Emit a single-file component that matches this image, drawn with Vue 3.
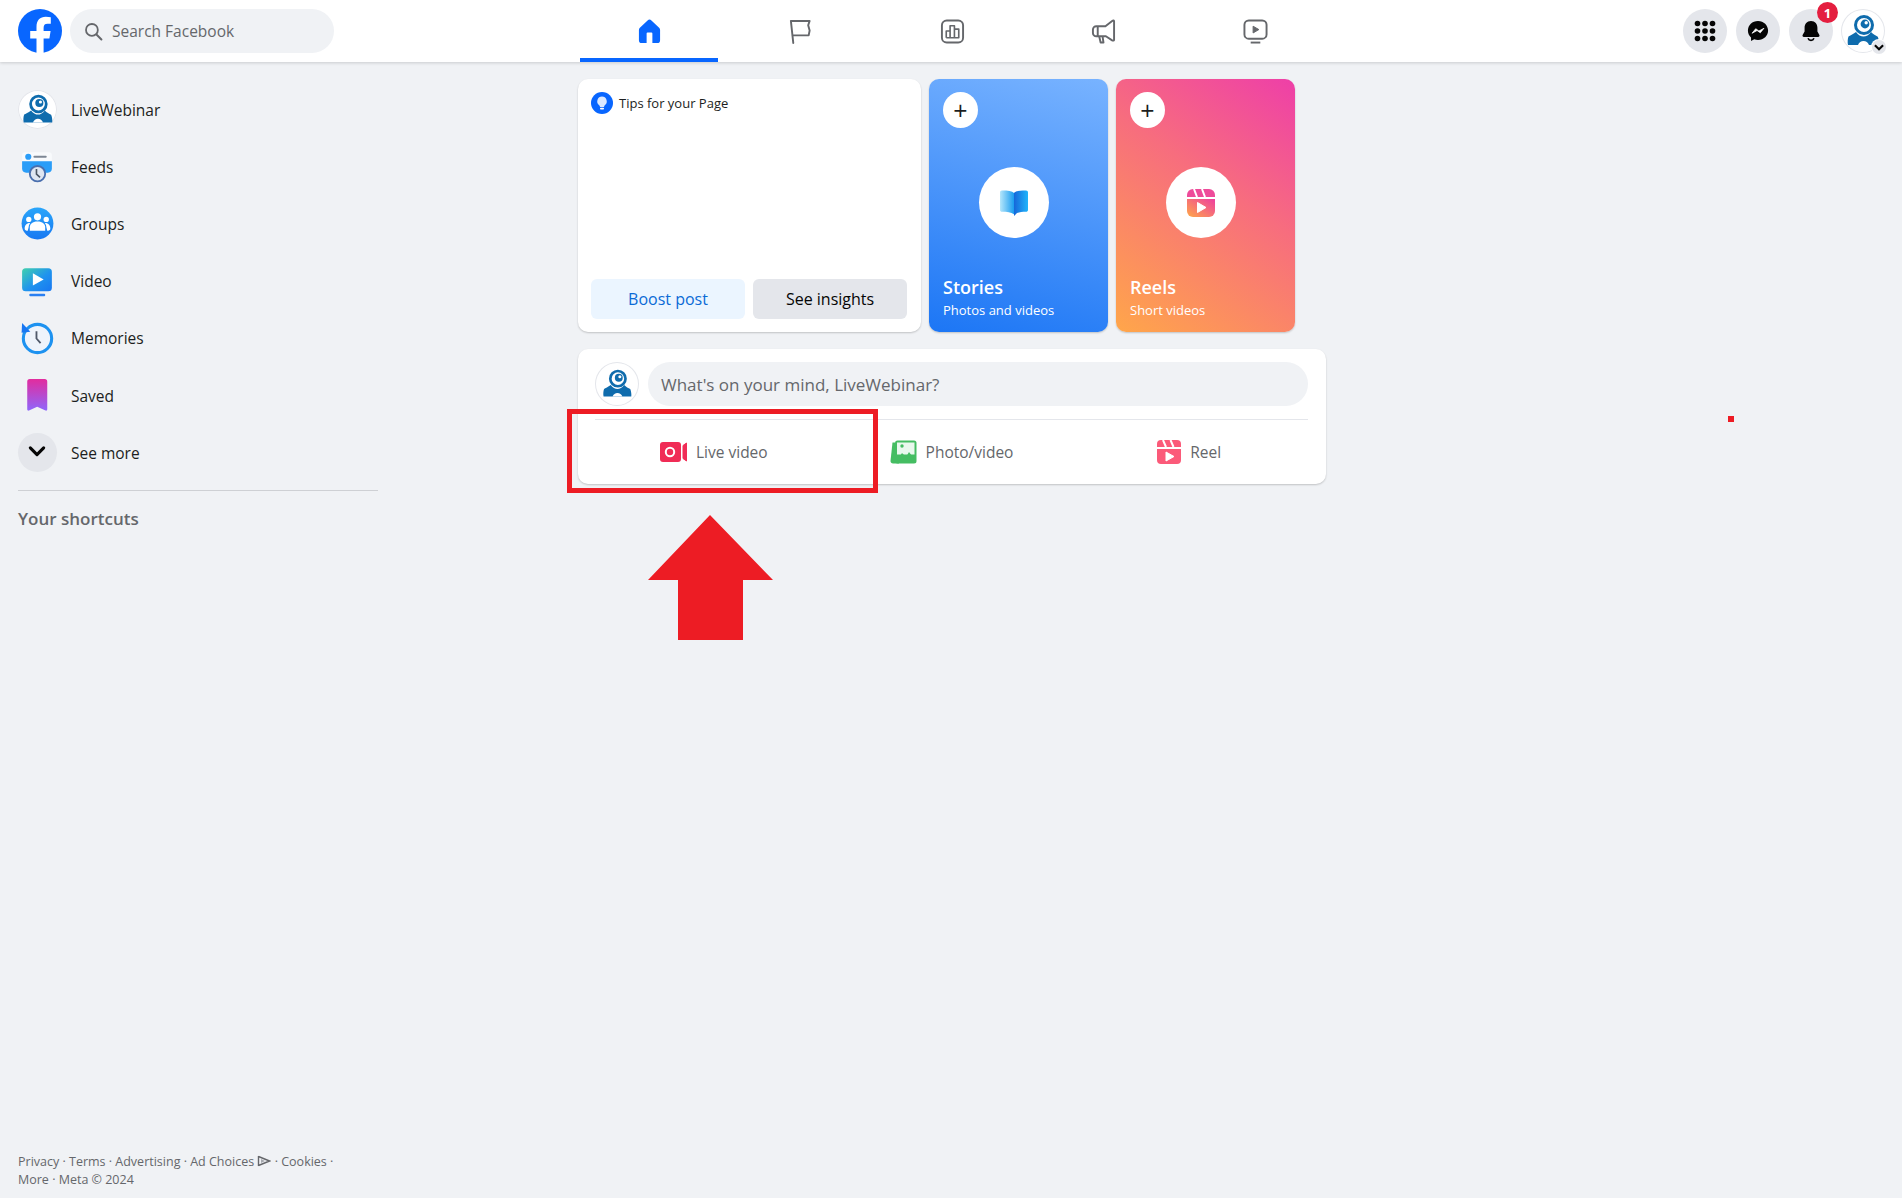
<script setup>
const tabs = ['home', 'flag', 'chart', 'mega', 'play']
const nav = [
  { label: 'LiveWebinar', icon: 'logo' },
  { label: 'Feeds', icon: 'feeds' },
  { label: 'Groups', icon: 'groups' },
  { label: 'Video', icon: 'video' },
  { label: 'Memories', icon: 'memories' },
  { label: 'Saved', icon: 'saved' },
  { label: 'See more', icon: 'more' },
]
</script>

<template>
  <div class="page">
    <svg class="defs" aria-hidden="true">
      <defs>
        <linearGradient id="gGroups" x1="0" y1="0" x2="0" y2="1"><stop offset="0" stop-color="#2aa6fa" /><stop offset="1" stop-color="#1778f2" /></linearGradient>
        <linearGradient id="gVideo" x1="0" y1="0" x2="1" y2="1"><stop offset="0" stop-color="#41d1ad" /><stop offset=".55" stop-color="#1f93ee" /><stop offset="1" stop-color="#1877f2" /></linearGradient>
        <linearGradient id="gSaved" x1="0" y1="0" x2="0" y2="1"><stop offset="0" stop-color="#e22c9e" /><stop offset="1" stop-color="#8f66fb" /></linearGradient>
        <linearGradient id="gBookL" x1="0" y1="0" x2="1" y2="0"><stop offset="0" stop-color="#b5e6fb" /><stop offset="1" stop-color="#1a9df0" /></linearGradient>
        <linearGradient id="gBookR" x1="0" y1="0" x2="1" y2="0"><stop offset="0" stop-color="#1667d9" /><stop offset="1" stop-color="#20b4fb" /></linearGradient>
        <linearGradient id="gReel" x1="0" y1="1" x2="1" y2="0"><stop offset="0" stop-color="#ffa848" /><stop offset="1" stop-color="#ee3da0" /></linearGradient>
      </defs>
      <symbol id="logo" viewBox="0 0 38 38">
        <circle cx="20" cy="13" r="8.5" fill="#fff" stroke="#0f6cad" stroke-width="3" />
        <circle cx="21" cy="12" r="4.4" fill="#0f6cad" />
        <circle cx="22.2" cy="10.8" r="1.7" fill="#fff" />
        <path d="M12 20c-3 2.300-6 3.500-7.500 4.500-.8 2-1.100 6-.5 8.500h31c.3-2.500-.2-6-1.200-8.300-2-1.200-4.800-2.500-6.800-4.700-2 3-5 4.500-7.500 4.500s-5.500-1.500-7.500-4.500z" fill="#0f6cad" />
        <path d="M14 33c1-2.500 3-4 5.500-4s4.500 1.500 5.500 4z" fill="#fff" />
      </symbol>
    </svg>

    <header class="topbar">
      <div class="top-left">
        <svg class="fb" viewBox="0 0 44 44">
          <circle cx="22" cy="22" r="22" fill="#0866ff" />
          <path d="M18.500 44V29.500h-6.300V22h6.300v-4.200c0-6.600 3.500-10 9.300-10 2 0 3.600.2 5 .5v6.500h-3.200c-3 0-4 1.500-4 4.300V22h7l-1.200 7.500h-5.800V44z" fill="#fff" />
        </svg>
        <div class="search">
          <svg class="search-icon" viewBox="0 0 18 18"><circle cx="7.500" cy="7.500" r="5.600" fill="none" stroke="#65676b" stroke-width="1.700" /><path d="M11.800 11.800 16.500 16.500" stroke="#65676b" stroke-width="1.900" stroke-linecap="round" /></svg>
          <span>Search Facebook</span>
        </div>
      </div>

      <nav class="tabs">
        <div v-for="t in tabs" :key="t" class="tab" :class="{ active: t === 'home' }">
          <svg v-if="t === 'home'" class="tab-icon" viewBox="0 0 26 26"><path fill-rule="evenodd" d="M11 1.500a3 3 0 0 1 4 0l8 7.500a3.500 3.500 0 0 1 1 2.500V22a3 3 0 0 1-3 3H5a3 3 0 0 1-3-3V11.500A3.500 3.500 0 0 1 3 9zM11 14a1 1 0 0 0-1 1v10h6V15a1 1 0 0 0-1-1z" fill="#0866ff" /></svg>
          <svg v-else-if="t === 'flag'" class="tab-icon" viewBox="0 0 26 26"><path d="M3 2h19.500l-1.500 4.500 1.500 5.500-1 5H4.500M3 2l2.500 23" fill="none" stroke="#65676b" stroke-width="2" stroke-linejoin="round" stroke-linecap="round" /></svg>
          <svg v-else-if="t === 'chart'" class="tab-icon" viewBox="0 0 26 26"><rect x="2" y="1.500" width="22" height="23" rx="5" fill="none" stroke="#65676b" stroke-width="2" /><path d="M6.500 19.500v-7h4v7M10.500 19.500V7h4.500v12.500M15 19.500v-9h4.500v9zM6.500 19.500h13" fill="none" stroke="#65676b" stroke-width="1.700" stroke-linejoin="round" /></svg>
          <svg v-else-if="t === 'mega'" class="tab-icon" viewBox="0 0 26 26"><path d="M24 2.500v19c0 1-1 1.300-2 .7l-6.500-4.200H5.500a3.500 3.500 0 0 1-3.500-3.500V11a3.500 3.500 0 0 1 3.500-3.500h9.500L22 2c1-.7 2-.5 2 .5zM8.500 18l1.500 6.500h3l-1-6.500M7 8v10" fill="none" stroke="#65676b" stroke-width="2" stroke-linejoin="round" /></svg>
          <svg v-else class="tab-icon" viewBox="0 0 26 26"><rect x="1.500" y="1.500" width="23" height="19" rx="4.500" fill="none" stroke="#65676b" stroke-width="2" /><path d="M10.500 7.500 16.500 11l-6 3.500z" fill="#65676b" stroke="#65676b" stroke-linejoin="round" /><path d="M8 24.500h10" stroke="#65676b" stroke-width="2" /></svg>
        </div>
      </nav>

      <div class="top-right">
        <div class="round">
          <svg viewBox="0 0 22 22" class="round-icon"><g fill="#050505"><circle v-for="c in 9" :key="c" :cx="3.500 + ((c - 1) % 3) * 7.500" :cy="3.500 + Math.floor((c - 1) / 3) * 7.500" r="2.800" /></g></svg>
        </div>
        <div class="round">
          <svg viewBox="0 0 24 24" class="round-icon"><path d="M12 1C5.700 1 1 5.500 1 11.500c0 3.100 1.300 5.800 3.400 7.700V23l3.500-2c1.300.5 2.700.7 4.100.7 6.300 0 11-4.400 11-10.200S18.300 1 12 1z" fill="#050505" /><path d="M5.500 14.500 9.500 9.500l3.500 2.500 5.500-3-4 5-3.500-2.500z" fill="#fff" stroke="#fff" stroke-width=".8" stroke-linejoin="round" /></svg>
        </div>
        <div class="round bell">
          <svg viewBox="0 0 24 24" class="round-icon"><path d="M12 1c-4.500 0-7 3.500-7 7.500v4L3 16c-.8 1.200 0 2.500 1.300 2.500h15.400c1.300 0 2.100-1.300 1.300-2.500l-2-3.500v-4C19 4.500 16.500 1 12 1z" fill="#050505" /><path d="M8.800 20a3.400 3.400 0 0 0 6.400 0" fill="none" stroke="#050505" stroke-width="1.800" /></svg>
          <span class="badge">1</span>
        </div>
        <div class="me">
          <svg class="logo-svg"><use href="#logo" /></svg>
          <span class="me-chev"><svg viewBox="0 0 12 12"><path d="M2.500 4.500 6 8l3.500-3.500" fill="none" stroke="#050505" stroke-width="1.800" /></svg></span>
        </div>
      </div>
    </header>

    <div class="body">
      <aside class="sidebar">
        <ul class="nav">
          <li v-for="item in nav" :key="item.label" class="nav-item">
            <span class="nav-icon" :class="item.icon">
              <svg v-if="item.icon === 'logo'" class="logo-svg"><use href="#logo" /></svg>
              <svg v-else-if="item.icon === 'feeds'" viewBox="0 0 38 38"><path d="M4 8a3 3 0 0 1 3-3h23a3 3 0 0 1 3 3v6H4z" fill="#f8fafc" /><path d="M4 14h29v7a4 4 0 0 1-4 4H8a4 4 0 0 1-4-4z" fill="#2a9df8" /><circle cx="10" cy="9.500" r="3" fill="#2a9df8" /><rect x="15" y="8.500" width="13" height="2" rx="1" fill="#7d8794" /><circle cx="19" cy="26" r="7.500" fill="#dfe6f2" stroke="#4a6fae" stroke-width="1.800" /><path d="M18 21.500v5l3.500 3" fill="none" stroke="#4b5563" stroke-width="1.600" /></svg>
              <svg v-else-if="item.icon === 'groups'" viewBox="0 0 38 38"><circle cx="19" cy="19" r="15.500" fill="url(#gGroups)" /><g fill="#fff"><circle cx="19" cy="12.500" r="3.500" /><circle cx="10.500" cy="15" r="2.600" /><circle cx="27.500" cy="15" r="2.600" /><path d="M11.500 26v-3.500c0-3 2.500-5.500 7.500-5.500s7.500 2.500 7.500 5.500V26z" /><path d="M9.500 26c-1.500 0-3-.5-3-2 0-3 1.500-5.500 5.300-5.500-1 1.500-1.500 3-1.500 4.500zM28.500 26c1.500 0 3-.5 3-2 0-3-1.500-5.500-5.300-5.500 1 1.500 1.500 3 1.500 4.500z" /></g></svg>
              <svg v-else-if="item.icon === 'video'" viewBox="0 0 38 38"><rect x="4" y="6" width="29" height="22.500" rx="3.500" fill="url(#gVideo)" /><path d="M14.500 11 25 17l-10.500 6z" fill="#fff" /><rect x="11" y="31" width="15.500" height="2.300" rx="1" fill="#2a80f2" /></svg>
              <svg v-else-if="item.icon === 'memories'" viewBox="0 0 38 38"><circle cx="19" cy="19" r="13.800" fill="#eef3fb" stroke="#1d92f0" stroke-width="3" /><path d="M4 4l8 8.500-8.500 1z" fill="#1877f2" /><path d="M18 12v7l4 4.500" fill="none" stroke="#50596a" stroke-width="1.800" /></svg>
              <svg v-else-if="item.icon === 'saved'" viewBox="0 0 38 38"><path d="M9 5.500a2.500 2.500 0 0 1 2.500-2.500h14.500a2.500 2.500 0 0 1 2.500 2.500v27c0 1-.8 1.500-1.700 1.100L18.700 30l-8 3.600c-.9.400-1.700-.1-1.700-1.100z" fill="url(#gSaved)" /></svg>
              <svg v-else viewBox="0 0 38 38" class="chev"><path d="M12 14.500 18.500 21l6.500-6.500" fill="none" stroke="#050505" stroke-width="3" stroke-linecap="round" stroke-linejoin="round" /></svg>
            </span>
            <span>{{ item.label }}</span>
          </li>
        </ul>
        <div class="side-divider"></div>
        <h2 class="shortcuts">Your shortcuts</h2>
        <footer class="legal">
          Privacy · Terms · Advertising · Ad Choices
          <svg class="adc" viewBox="0 0 14 12"><path d="M1.500 1v10M1.500 1.500l11 4.500-11 4.500" fill="none" stroke="#65676b" stroke-width="1.400" /><path d="M4 4v4l4-2z" fill="#a6a9ae" /></svg>
          · Cookies ·<br />More · Meta © 2024
        </footer>
      </aside>

      <main class="main">
        <section class="row">
          <div class="card tips">
            <div class="tips-head">
              <svg class="bulb" viewBox="0 0 22 22"><circle cx="11" cy="11" r="11" fill="#0866ff" /><path d="M11 4.500a4.800 4.800 0 0 0-3 8.500c.6.500 1 1.200 1 2h4c0-.8.400-1.500 1-2a4.800 4.800 0 0 0-3-8.500z" fill="#dbe9ff" /><rect x="9" y="15.800" width="4" height="1.800" rx=".8" fill="#fff" /></svg>
              <span>Tips for your Page</span>
            </div>
            <div class="tips-actions">
              <button class="btn boost">Boost post</button>
              <button class="btn insights">See insights</button>
            </div>
          </div>

          <div class="story stories">
            <span class="plus">+</span>
            <span class="big">
              <svg viewBox="0 0 30 30" class="big-icon"><path d="M15 5c-2-2-6-2.500-12-2.500-1.300 0-2 .7-2 2V22c0 1 .8 1.800 2 1.800 5 0 9 .6 12 2.500z" fill="url(#gBookL)" /><path d="M15 5c2-2 6-2.500 12-2.500 1.300 0 2 .7 2 2V22c0 1-.8 1.800-2 1.800-3.500 0-6.500.3-9 1.200L15 28z" fill="url(#gBookR)" /></svg>
            </span>
            <strong>Stories</strong>
            <small>Photos and videos</small>
          </div>

          <div class="story reels">
            <span class="plus">+</span>
            <span class="big">
              <svg viewBox="0 0 30 30" class="big-icon"><path d="M1 11h28v12a6 6 0 0 1-6 6H7a6 6 0 0 1-6-6z" fill="url(#gReel)" /><path d="M7 1h16a6 6 0 0 1 6 6v2H1V7a6 6 0 0 1 6-6z" fill="#ee4b9a" /><path d="M8 1l3 8M16 1l3 8" stroke="#fff" stroke-width="2" /><path d="M11.500 14.500 20 19.500l-8.500 5z" fill="#fff" stroke="#fff" stroke-linejoin="round" /></svg>
            </span>
            <strong>Reels</strong>
            <small>Short videos</small>
          </div>
        </section>

        <section class="card composer">
          <div class="composer-top">
            <span class="composer-avatar"><svg class="logo-svg"><use href="#logo" /></svg></span>
            <div class="mind">What's on your mind, LiveWebinar?</div>
          </div>
          <div class="composer-actions">
            <div class="action">
              <svg viewBox="0 0 27 24" class="act-icon"><rect x="0" y="2" width="21" height="20" rx="3" fill="#f02c56" /><circle cx="10" cy="12" r="4.200" fill="none" stroke="#fff" stroke-width="2" /><path d="M23 5.500 26.500 3v18L23 18.500z" fill="#f02c56" stroke="#f02c56" stroke-linejoin="round" /></svg>
              <span>Live video</span>
            </div>
            <div class="action">
              <svg viewBox="0 0 27 24" class="act-icon"><path d="M5 2.500H2.500L.5 21c0 1.500 1 2.500 2.500 2.500H9z" fill="#45bd62" /><rect x="5" y=".5" width="21.500" height="23" rx="2.500" fill="#45bd62" stroke="#fff" stroke-width="0" /><rect x="7" y="2.500" width="17.500" height="12" fill="#e9f8ed" /><circle cx="12" cy="6" r="1.700" fill="#45bd62" /><path d="M6 22l6-9 4 4 3-5 6 8v2H6z" fill="#45bd62" /></svg>
              <span>Photo/video</span>
            </div>
            <div class="action">
              <svg viewBox="0 0 24 24" class="act-icon reel-ic"><path d="M0 9h24v11a4 4 0 0 1-4 4H4a4 4 0 0 1-4-4z" fill="#fb5a79" /><path d="M4 0h16a4 4 0 0 1 4 4v3H0V4a4 4 0 0 1 4-4z" fill="#fb5a79" /><path d="M6 0l3 7M13.500 0l3 7" stroke="#fff" stroke-width="2" /><path d="M9 12l8 4.500-8 4.500z" fill="#fff" stroke="#fff" stroke-linejoin="round" /></svg>
              <span>Reel</span>
            </div>
          </div>
        </section>

        <div class="highlight"></div>
        <svg class="arrow" viewBox="0 0 125 125"><path d="M62 0 125 65H95v60H30V65H0z" fill="#ed1c24" /></svg>
      </main>

      <span class="dot"></span>
    </div>
  </div>
</template>

<style>
html, body { margin: 0; background: #f0f2f5; }
</style>

<style scoped>
.page {
  width: 1902px;
  height: 1198px;
  overflow: hidden;
  background: #f0f2f5;
  font-family: "Open Sans", "Noto Sans", sans-serif;
  color: #050505;
  display: flex;
  flex-direction: column;
}
.defs { position: absolute; width: 0; height: 0; }
.logo-svg { width: 100%; height: 100%; display: block; }

.topbar {
  flex: 0 0 62px;
  display: grid;
  grid-template-columns: 580px auto 1fr;
  background: #fff;
  box-shadow: 0 1px 3px rgba(0, 0, 0, .16);
  position: relative;
  z-index: 2;
}
.top-left { display: flex; align-items: center; gap: 8px; padding-left: 18px; }
.fb { width: 44px; height: 44px; }
.search {
  width: 264px;
  height: 44px;
  border-radius: 22px;
  background: #f0f2f5;
  display: flex;
  align-items: center;
  gap: 9px;
  padding-left: 14px;
  box-sizing: border-box;
  font-size: 15.500px;
  color: #65676b;
}
.search-icon { width: 19px; height: 19px; }
.tabs { display: flex; gap: 13.500px; }
.tab {
  width: 138px;
  height: 62px;
  box-sizing: border-box;
  padding-bottom: 0;
  display: flex;
  align-items: center;
  justify-content: center;
}
.tab.active { border-bottom: 4px solid #0866ff; padding-top: 4px; }
.tab-icon { width: 25px; height: 25px; }
.top-right { display: flex; justify-content: flex-end; align-items: center; gap: 9px; padding-right: 17px; }
.round {
  position: relative;
  width: 44px;
  height: 44px;
  border-radius: 50%;
  background: #e4e6eb;
  display: flex;
  align-items: center;
  justify-content: center;
}
.round-icon { width: 22px; height: 22px; }
.badge {
  position: absolute;
  top: -7px;
  right: -5px;
  width: 21px;
  height: 21px;
  border-radius: 50%;
  background: #e41e3f;
  color: #fff;
  font-size: 13px;
  font-weight: 700;
  display: flex;
  align-items: center;
  justify-content: center;
}
.me {
  position: relative;
  width: 44px;
  height: 44px;
  border-radius: 50%;
  background: #fff;
  box-shadow: inset 0 0 0 1px #e4e6eb;
  box-sizing: border-box;
  padding: 3px;
  margin-left: -1px;
}
.me-chev {
  position: absolute;
  right: -1px;
  bottom: -1px;
  width: 14px;
  height: 14px;
  border-radius: 50%;
  background: #e4e6eb;
  box-shadow: 0 0 0 1px #fff;
}
.me-chev svg { width: 14px; height: 14px; display: block; }

.body { flex: 1; display: flex; position: relative; min-height: 0; }
.sidebar {
  width: 578px;
  flex: none;
  box-sizing: border-box;
  padding: 19px 0 9px 18px;
  display: flex;
  flex-direction: column;
}
.nav { list-style: none; margin: 0; padding: 0; width: 360px; }
.nav-item {
  height: 57.200px;
  display: flex;
  align-items: center;
  gap: 14px;
  font-size: 15.500px;
  color: #1c1e21;
}
.nav-icon { width: 39px; height: 39px; flex: none; display: block; }
.nav-icon svg { width: 39px; height: 39px; display: block; }
.nav-icon.logo {
  border-radius: 50%;
  background: #fff;
  box-shadow: inset 0 0 0 1px #e4e6eb;
  box-sizing: border-box;
  padding: 2px;
}
.nav-icon.logo svg { width: 35px; height: 35px; }
.nav-icon.more { border-radius: 50%; background: #e4e6eb; }
.side-divider { width: 360px; height: 1px; background: #ced0d4; margin-top: 9px; }
.shortcuts {
  margin: 16px 0 0;
  font-size: 17px;
  line-height: 23px;
  font-weight: 600;
  color: #65676b;
}
.legal {
  margin-top: auto;
  width: 320px;
  font-size: 12.500px;
  line-height: 18px;
  color: #65676b;
}
.adc { width: 14px; height: 12px; vertical-align: -1px; }

.main { width: 748px; padding-top: 17px; position: relative; }
.row { display: flex; gap: 8px; }
.card {
  background: #fff;
  border-radius: 10px;
  box-shadow: 0 1px 2px rgba(0, 0, 0, .2);
}
.tips {
  width: 343px;
  height: 253px;
  box-sizing: border-box;
  padding: 13px 14px 13px 13px;
  display: flex;
  flex-direction: column;
  justify-content: space-between;
}
.tips-head { display: flex; align-items: center; gap: 6px; font-size: 13px; color: #1c1e21; }
.bulb { width: 22px; height: 22px; }
.tips-actions { display: flex; gap: 8px; }
.btn {
  width: 154px;
  height: 40px;
  border: 0;
  border-radius: 6px;
  font: inherit;
  font-size: 16px;
  font-weight: 500;
}
.boost { background: #ebf5ff; color: #0a6ad6; }
.insights { background: #e4e6eb; color: #050505; }

.story {
  position: relative;
  width: 179px;
  height: 253px;
  border-radius: 10px;
  box-shadow: 0 1px 2px rgba(0, 0, 0, .2);
  color: #fff;
  box-sizing: border-box;
  padding: 196px 14px 0;
  display: flex;
  flex-direction: column;
}
.stories { background: linear-gradient(195deg, #78b3ff 0%, #1c76f5 100%); }
.reels { background: linear-gradient(215deg, #ee3fa8 0%, #f76d7e 42%, #ffa64a 100%); }
.plus {
  position: absolute;
  left: 14px;
  top: 13px;
  width: 35px;
  height: 36px;
  border-radius: 50%;
  background: #fff;
  color: #1c1e21;
  font-size: 25px;
  font-weight: 400;
  display: flex;
  align-items: center;
  justify-content: center;
  line-height: 1;
}
.big {
  position: absolute;
  left: 50px;
  top: 88px;
  width: 70px;
  height: 71px;
  border-radius: 50%;
  background: #fff;
  display: flex;
  align-items: center;
  justify-content: center;
}
.big-icon { width: 30px; height: 30px; }
.story strong { font-size: 18px; font-weight: 600; line-height: 24px; }
.story small { font-size: 13px; line-height: 22px; }

.composer { margin-top: 17px; height: 135px; box-sizing: border-box; padding: 13px 18px 0 17px; }
.composer-top { display: flex; gap: 9px; padding-bottom: 13px; border-bottom: 1px solid #e4e6eb; }
.composer-avatar {
  width: 44px;
  height: 44px;
  border-radius: 50%;
  flex: none;
  background: #fff;
  box-shadow: inset 0 0 0 1px #e4e6eb;
  box-sizing: border-box;
  padding: 5px;
}
.mind {
  flex: 1;
  height: 44px;
  border-radius: 22px;
  background: #f0f2f5;
  padding-left: 13px;
  display: flex;
  align-items: center;
  font-size: 17px;
  color: #65676b;
}
.composer-actions { display: grid; grid-template-columns: repeat(3, 1fr); height: 64px; }
.action {
  display: flex;
  align-items: center;
  justify-content: center;
  gap: 9px;
  font-size: 15.500px;
  font-weight: 500;
  color: #65676b;
}
.act-icon { width: 27px; height: 24px; }
.reel-ic { width: 24px; }

.highlight {
  position: absolute;
  left: -11px;
  top: 347px;
  width: 311px;
  height: 84px;
  box-sizing: border-box;
  border: 5px solid #ed1c24;
}
.arrow { position: absolute; left: 70px; top: 453px; width: 125px; height: 125px; }
.dot { position: absolute; left: 1728px; top: 354px; width: 6px; height: 6px; background: #ed1c24; }
</style>
